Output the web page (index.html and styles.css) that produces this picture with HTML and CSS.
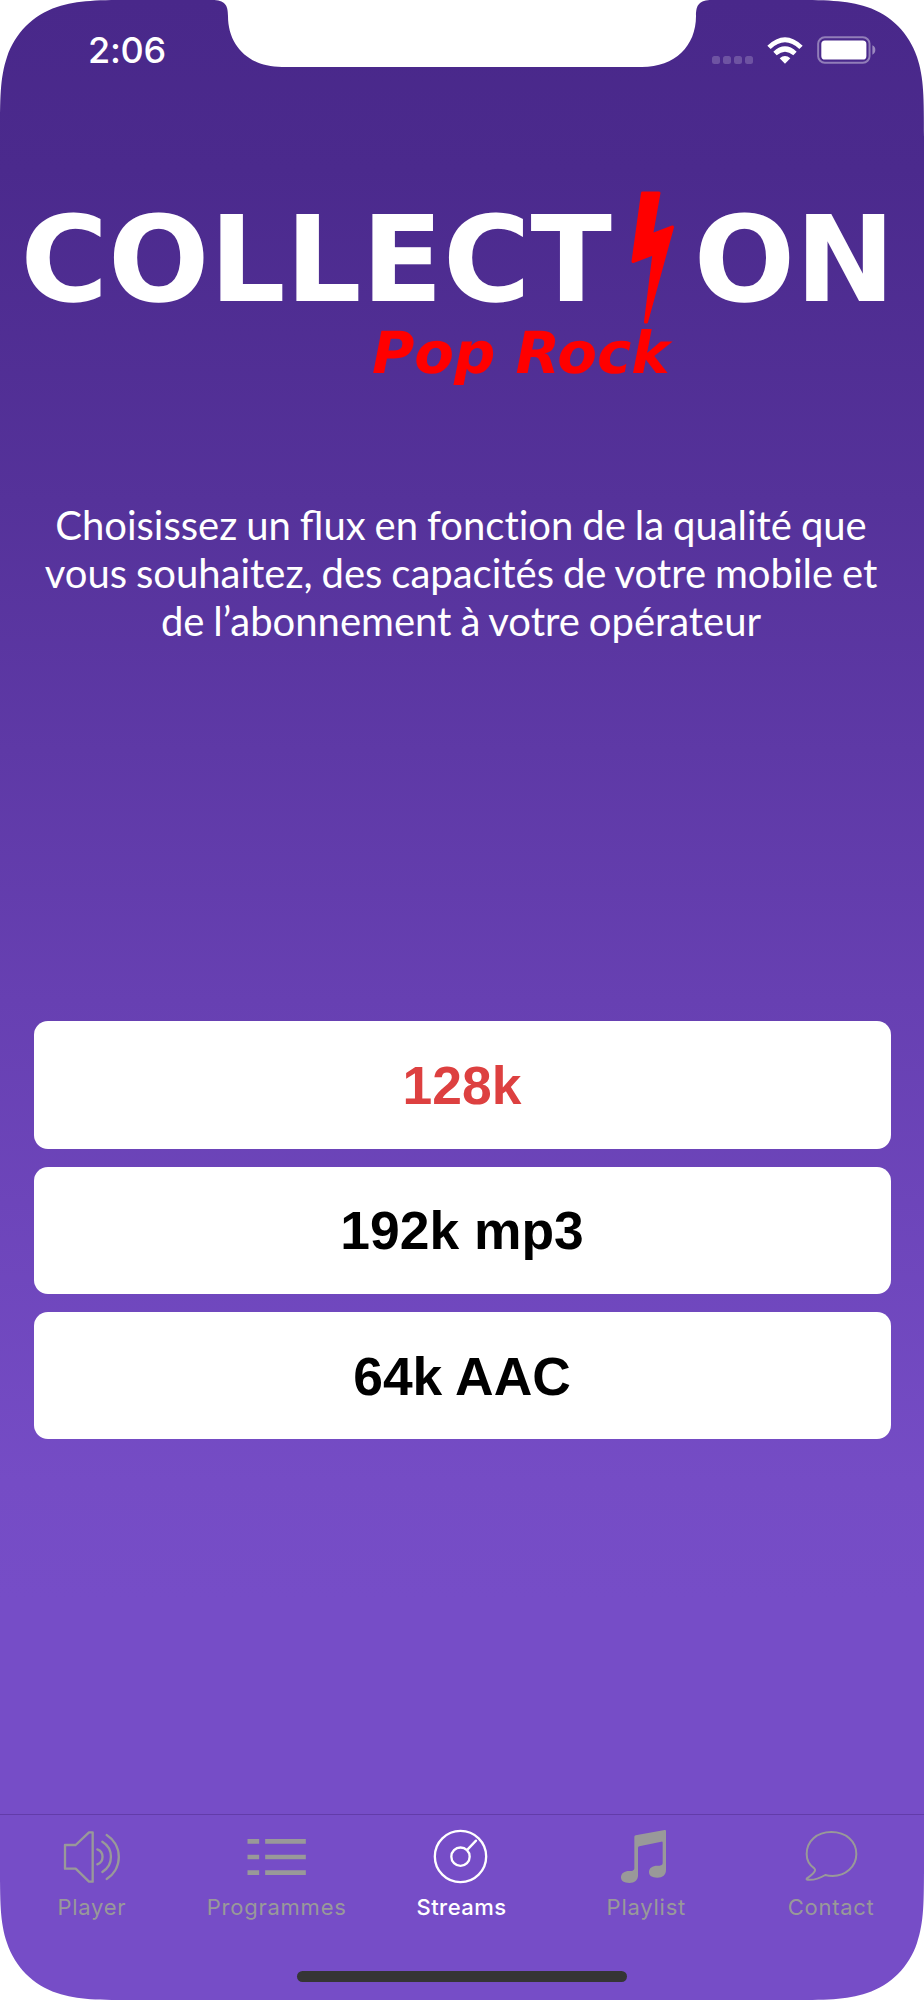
FILE: index.html
```
<!DOCTYPE html>
<html lang="fr">
<head>
    <meta charset="UTF-8">
    <title>Collection Pop Rock</title>
    <meta name="viewport" content="width=device-width, initial-scale=1.0">
    <link rel="stylesheet" href="styles.css">
</head>
<body>
    <div class="phone">
        <header class="status-bar">
            <span class="time">2:06</span>
            <div class="status-icons">
                <div class="signal"><i></i><i></i><i></i><i></i></div>
                <svg class="wifi" viewBox="0 0 108 81">
                    <path d="M1 26 Q54 -25 107 26 L97 36 Q54 -4 11 36 Z"/>
                    <path d="M19 44 Q54 12 89 44 L79 55 Q54 33 29 55 Z"/>
                    <path d="M38 64 Q54 50 70 64 L54 80 Z"/>
                </svg>
                <svg class="battery" viewBox="0 0 178 84">
                    <rect class="battery-frame" x="3.5" y="3.5" width="155" height="77" rx="20"/>
                    <rect x="13" y="13" width="136" height="58" rx="11"/>
                    <path class="battery-cap" d="M167 28 Q176 32 176 42 T167 56 Z"/>
                </svg>
            </div>
        </header>

        <main>
            <svg class="logo" viewBox="0 0 924 220">
                <text class="logo-name" x="20.5" y="130.7">COLLECT</text>
                <text class="logo-name" x="693.8" y="130.7">ON</text>
                <path class="logo-bolt" d="M642.5 23 H659 L651.5 65 L672.5 57 L646.5 152 H645.5 L654 83.5 L633 91.5 Z"/>
                <text class="logo-genre" x="372" y="203.3">Pop Rock</text>
            </svg>

            <p class="intro">Choisissez un flux en <span class="no-liga">fonction</span> de la qualité que vous souhaitez, des capacités de votre mobile et de l’abonnement à votre opérateur</p>

            <div class="streams">
                <button class="stream selected">128k</button>
                <button class="stream">192k mp3</button>
                <button class="stream">64k AAC</button>
            </div>
        </main>

        <nav class="tab-bar">
            <a class="tab">
                <svg viewBox="0 0 180 180">
                    <g class="line">
                        <path d="M9 57 H41 L81 19 H92 V167 H81 L41 128 H9 Z"/>
                        <path d="M106 70 A24 24 0 0 1 106 115"/>
                        <path d="M121 47 A53 53 0 0 1 121 138"/>
                        <path d="M134 27 A78 78 0 0 1 134 159"/>
                    </g>
                </svg>
                <span>Player</span>
            </a>
            <a class="tab">
                <svg viewBox="0 0 180 180">
                    <path d="M1.5 39h35v14h-35zM54.5 39h122v14h-122zM1.5 86h35v14h-35zM54.5 86h122v14h-122zM1.5 133h35v14h-35zM54.5 133h122v14h-122z"/>
                </svg>
                <span>Programmes</span>
            </a>
            <a class="tab active">
                <svg viewBox="0 0 180 180">
                    <g class="line">
                        <circle cx="85.5" cy="91.5" r="77"/>
                        <circle cx="85.5" cy="92" r="27.5"/>
                        <path d="M107 70 L132 44"/>
                    </g>
                </svg>
                <span>Streams</span>
            </a>
            <a class="tab">
                <svg viewBox="0 0 180 180">
                    <path d="M52 33 Q52 29 56 28 L143 12 Q147 11 147 15 V132 C147 147 137 155 121 155 C105 155 96 149 96 138 C96 126 106 119 121 119 H128 Q137 118 137 111 V50 Q137 46 133 47 L67 61 Q63 62 63 66 V148 C63 163 53 171 37 171 C21 171 12 165 12 154 C12 142 22 135 37 135 H43 Q52 134 52 127 Z"/>
                </svg>
                <span>Playlist</span>
            </a>
            <a class="tab">
                <svg viewBox="0 0 180 180">
                    <path class="bubble" d="M37 127 C22 117 14 101 14 84 C14 46 44 18 88 18 S163 46 163 84 S130 150 92 150 Q80 150 70 147 C56 155 40 164 17 161 C12 160 13 158 19 154 C28 148 36 141 39 134 Q40 130 37 127 Z"/>
                </svg>
                <span>Contact</span>
            </a>
        </nav>
        <div class="home-indicator"></div>
    </div>
</body>
</html>
```

FILE: styles.css
```
* {
    box-sizing: border-box;
}
body {
    margin: 0;
    background: #fff;
}

/* screen outline: rounded corners and notch */
.phone {
    display: flex;
    flex-direction: column;
    width: 924px;
    height: 2000px;
    background: linear-gradient(#49288a 0, #4b2a8d 170px, #55329a 500px, #6740b2 1000px, #754cc5 1480px, #764dc7 1600px);
    clip-path: path("M138 0 H212 C225 0 228 5 228 16 C228 46 249 67 282 67 H642 C675 67 696 46 696 16 C696 5 699 0 712 0 H786 C826 0 846 0 867 7 C891 15 909 33 917 57 C924 78 924 98 924 138 V1862 C924 1902 924 1922 917 1943 C909 1967 891 1985 867 1993 C846 2000 826 2000 786 2000 H138 C98 2000 78 2000 57 1993 C33 1985 15 1967 7 1943 C0 1922 0 1902 0 1862 V138 C0 98 0 78 7 57 C15 33 33 15 57 7 C78 0 98 0 138 0 Z");
}

.status-bar {
    display: flex;
    justify-content: space-between;
    height: 170px;
    padding: 36px 48px 0 88px;
    color: #fff;
}
.time {
    font-family: Inter, sans-serif;
    font-size: 36px;
    font-weight: 500;
    line-height: 29px;
    letter-spacing: -0.3px;
}
.status-icons {
    display: flex;
    align-items: flex-start;
    height: 28px;
}
.status-icons svg {
    fill: #fff;
}
.signal {
    display: flex;
    gap: 3px;
    margin: 19.5px 14px 0 0;
}
.signal i {
    width: 8px;
    height: 8px;
    border-radius: 2.5px;
    background: rgba(255, 255, 255, 0.2);
}
.wifi {
    width: 36px;
    height: 27px;
    margin: 1px 14px 0 0;
}
.battery {
    width: 59px;
    height: 28px;
}
.status-icons .battery-frame {
    fill: none;
    stroke: rgba(255, 255, 255, 0.4);
    stroke-width: 6;
}
.status-icons .battery-cap {
    fill: rgba(255, 255, 255, 0.45);
}

main {
    flex: 1;
}
.logo {
    display: block;
    width: 924px;
    height: 220px;
}
.logo text {
    font-family: "DejaVu Sans", sans-serif;
    font-weight: bold;
    text-rendering: geometricPrecision;
}
.logo .logo-name {
    font-size: 119.3px;
    fill: #fff;
}
.logo .logo-genre {
    font-size: 57.8px;
    font-style: italic;
    fill: #f00;
}
.logo-bolt {
    fill: #f00;
    stroke: #f00;
    stroke-width: 3;
    stroke-linejoin: round;
}

.intro {
    margin: 111px 41px 0 39px;
    color: #fff;
    font-family: Lato, sans-serif;
    font-size: 40px;
    line-height: 48px;
    text-align: center;
    word-spacing: -1.3px;
}
.no-liga {
    font-variant-ligatures: none;
}

.streams {
    display: flex;
    flex-direction: column;
    gap: 18px;
    margin: 376.3px 33.5px 0;
}
.stream {
    height: 127.3px;
    padding: 1px 0 0;
    border: none;
    border-radius: 14px;
    background: #fff;
    color: #000;
    font-family: "Liberation Sans", Arial, sans-serif;
    font-size: 53.4px;
    font-weight: bold;
}
.stream.selected {
    color: #dd4040;
}

.tab-bar {
    display: grid;
    grid-template-columns: repeat(5, 1fr);
    height: 157px;
    padding-top: 11px;
    border-top: 1px solid #623ca9;
    font-family: Inter, sans-serif;
    font-size: 22px;
    font-weight: 400;
    letter-spacing: 0.75px;
}
.tab {
    display: flex;
    flex-direction: column;
    align-items: center;
    gap: 7px;
    color: #999;
    line-height: 28px;
}
.tab span {
    margin-right: 1px;
}
.tab svg {
    width: 60px;
    height: 60px;
    fill: currentColor;
}
.tab .line {
    fill: none;
    stroke: currentColor;
    stroke-width: 7;
    stroke-linecap: round;
    stroke-linejoin: round;
}
.tab .bubble {
    fill: none;
    stroke: currentColor;
    stroke-width: 6;
}
.tab.active {
    color: #fff;
    font-weight: 500;
    letter-spacing: 0.45px;
}

.home-indicator {
    width: 330px;
    height: 11px;
    margin: 0 auto 18px;
    border-radius: 6px;
    background: #353535;
}
```
